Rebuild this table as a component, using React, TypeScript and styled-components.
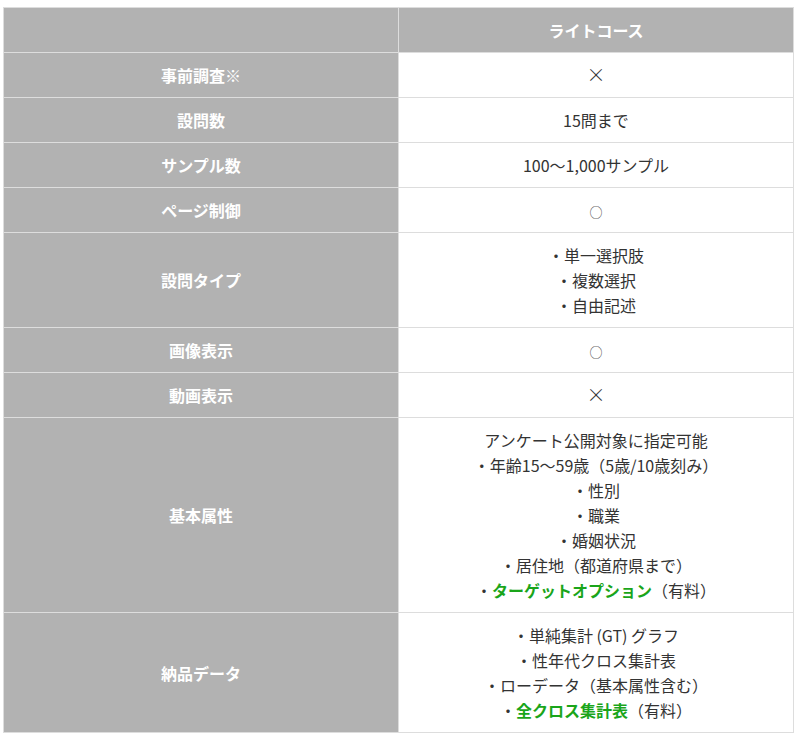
import { ReactElement, ReactNode } from "react";
import styled, { createGlobalStyle } from "styled-components";

const GlobalStyle = createGlobalStyle`
  body {
    margin: 0;
    background: #fff;
    font-family: Meiryo, "Noto Sans CJK JP", "Noto Sans", sans-serif;
  }
`;

const Wrap = styled.div`
  padding: 7px 6px 0 3px;
`;

const Table = styled.table`
  width: 100%;
  border-collapse: collapse;
  table-layout: fixed;
  font-size: 16px;
  line-height: 25px;
  color: #333;
`;

const Head = styled.th`
  width: 50%;
  background: #b2b2b2;
  color: #fff;
  font-weight: bold;
  border: 1px solid #ddd;
  padding: 10px 10px 9px;
  height: 25px;
  text-align: center;
`;

const Label = styled.th`
  background: #b2b2b2;
  color: #fff;
  font-weight: bold;
  border: 1px solid #ddd;
  padding: 10px 10px 9px;
  text-align: center;
  vertical-align: middle;
`;

const Value = styled.td`
  background: #fff;
  border: 1px solid #ddd;
  padding: 10px 10px 9px;
  text-align: center;
  vertical-align: middle;
`;

const Line = styled.div`
  white-space: nowrap;
  height: 25px;
`;

const Mark = styled.span<{ $size: number }>`
  font-size: ${p => p.$size}px;
  line-height: 1;
  font-weight: 300;
`;

const Paid = styled.span`
  color: #1aa51a;
  font-weight: bold;
`;

interface IRow {
  label: string;
  value: ReactNode[];
}

const cross = <Mark $size={19}>×</Mark>;
const circle = <Mark $size={13}>○</Mark>;

const rows: IRow[] = [
  { label: "事前調査※", value: [cross] },
  { label: "設問数", value: ["15問まで"] },
  { label: "サンプル数", value: ["100〜1,000サンプル"] },
  { label: "ページ制御", value: [circle] },
  { label: "設問タイプ", value: ["・単一選択肢", "・複数選択", "・自由記述"] },
  { label: "画像表示", value: [circle] },
  { label: "動画表示", value: [cross] },
  {
    label: "基本属性",
    value: [
      "アンケート公開対象に指定可能",
      "・年齢15〜59歳（5歳/10歳刻み）",
      "・性別",
      "・職業",
      "・婚姻状況",
      "・居住地（都道府県まで）",
      <>
        ・<Paid>ターゲットオプション</Paid>（有料）
      </>,
    ],
  },
  {
    label: "納品データ",
    value: [
      "・単純集計 (GT) グラフ",
      "・性年代クロス集計表",
      "・ローデータ（基本属性含む）",
      <>
        ・<Paid>全クロス集計表</Paid>（有料）
      </>,
    ],
  },
];

const App = (): ReactElement => {
  return (
    <>
      <GlobalStyle />
      <Wrap>
        <Table>
          <thead>
            <tr>
              <Head />
              <Head>ライトコース</Head>
            </tr>
          </thead>
          <tbody>
            {rows.map(row => (
              <tr key={row.label}>
                <Label>{row.label}</Label>
                <Value>
                  {row.value.map((line, i) => (
                    <Line key={i}>{line}</Line>
                  ))}
                </Value>
              </tr>
            ))}
          </tbody>
        </Table>
      </Wrap>
    </>
  );
};

export default App;
